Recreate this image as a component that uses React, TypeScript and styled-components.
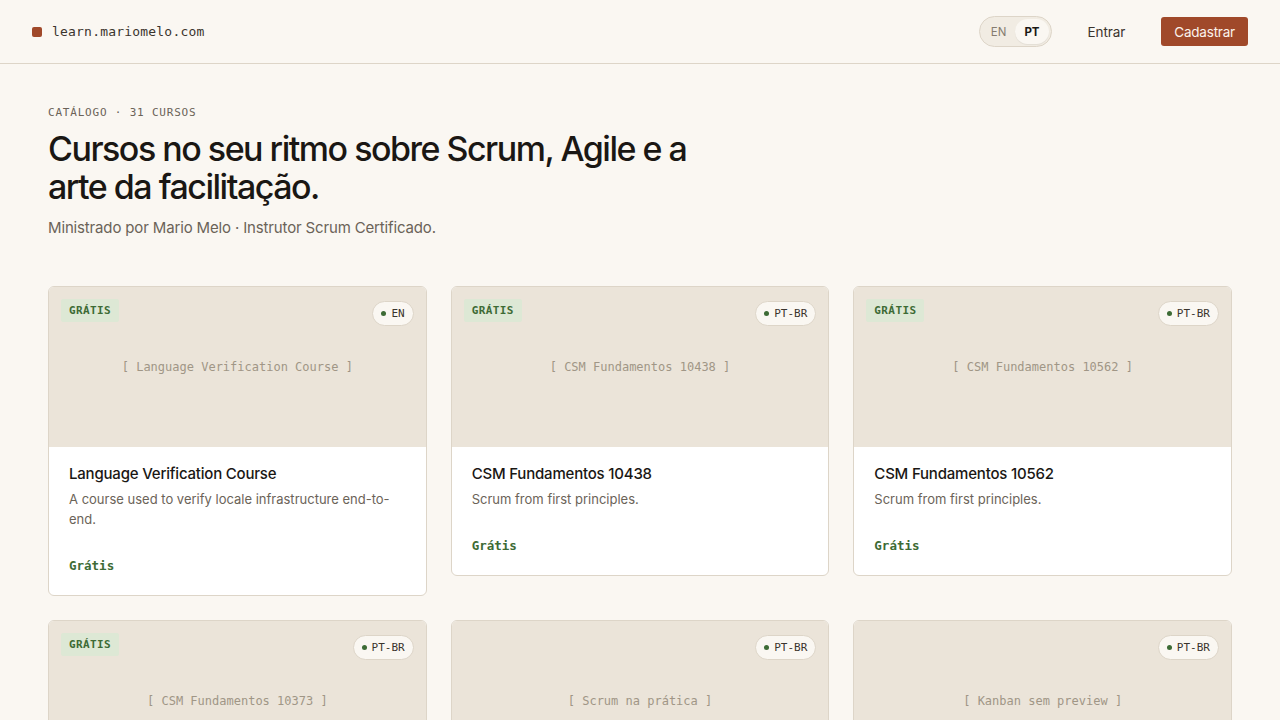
import styled, { createGlobalStyle } from "styled-components";

const C = {
  bg: "#faf7f2",
  line: "#ddd5c8",
  ink: "#1a1714",
  muted: "#6b6358",
  accent: "#a0492a",
  media: "#ebe4d9",
  green: "#3d6b35",
  greenBg: "#dde8d5",
};

const sans = `Inter, "Noto Sans", "DejaVu Sans", sans-serif`;
const mono = `"DejaVu Sans Mono", "Liberation Mono", monospace`;

type Course = {
  title: string;
  desc?: string;
  locale: string;
  free?: boolean;
};

const courses: Course[] = [
  {
    title: "Language Verification Course",
    desc: "A course used to verify locale infrastructure end-to-end.",
    locale: "EN",
    free: true,
  },
  { title: "CSM Fundamentos 10438", desc: "Scrum from first principles.", locale: "PT-BR", free: true },
  { title: "CSM Fundamentos 10562", desc: "Scrum from first principles.", locale: "PT-BR", free: true },
  { title: "CSM Fundamentos 10373", desc: "Scrum from first principles.", locale: "PT-BR", free: true },
  { title: "Scrum na prática", desc: "Scrum from first principles.", locale: "PT-BR" },
  { title: "Kanban sem preview", desc: "Scrum from first principles.", locale: "PT-BR" },
];

export default function App() {
  return (
    <>
      <GlobalStyle />
      <Header>
        <Brand>
          <BrandMark />
          learn.mariomelo.com
        </Brand>
        <Nav>
          <LangToggle>
            <LangOption>EN</LangOption>
            <LangOption $active>PT</LangOption>
          </LangToggle>
          <LinkButton>Entrar</LinkButton>
          <PrimaryButton>Cadastrar</PrimaryButton>
        </Nav>
      </Header>
      <Main>
        <Eyebrow>CATÁLOGO · 31 CURSOS</Eyebrow>
        <Title>Cursos no seu ritmo sobre Scrum, Agile e a arte da facilitação.</Title>
        <Lead>Ministrado por Mario Melo · Instrutor Scrum Certificado.</Lead>
        <Grid>
          {courses.map((c) => (
            <Card key={c.title}>
              <Media>
                {c.free && <FreeTag>GRÁTIS</FreeTag>}
                <LocaleChip>
                  <Dot />
                  {c.locale}
                </LocaleChip>
                <Placeholder>[ {c.title} ]</Placeholder>
              </Media>
              <Body>
                <CardTitle>{c.title}</CardTitle>
                {c.desc && <CardDesc>{c.desc}</CardDesc>}
                <Price>{c.free ? "Grátis" : "R$ 490"}</Price>
              </Body>
            </Card>
          ))}
        </Grid>
      </Main>
    </>
  );
}

const GlobalStyle = createGlobalStyle`
  * { box-sizing: border-box; }
  body {
    margin: 0;
    background: ${C.bg};
    color: ${C.ink};
    font-family: ${sans};
  }
`;

const Header = styled.header`
  height: 64px;
  padding: 0 32px;
  display: flex;
  align-items: center;
  justify-content: space-between;
  border-bottom: 1px solid ${C.line};
`;

const Brand = styled.div`
  display: flex;
  align-items: center;
  gap: 10px;
  font-family: ${mono};
  font-size: 13px;
  letter-spacing: 0.2px;
  color: #3a342d;
`;

const BrandMark = styled.span`
  width: 10px;
  height: 10px;
  border-radius: 2px;
  background: ${C.accent};
`;

const Nav = styled.nav`
  display: flex;
  align-items: center;
`;

const LangToggle = styled.div`
  display: flex;
  align-items: center;
  height: 31px;
  padding: 2px;
  border: 1px solid ${C.line};
  border-radius: 16px;
  background: #f1ece3;
  margin-right: 24px;
`;

const LangOption = styled.span<{ $active?: boolean }>`
  height: 25px;
  display: flex;
  align-items: center;
  padding: 0 9px;
  border-radius: 13px;
  font-family: ${sans};
  font-size: 11.5px;
  font-weight: ${(p) => (p.$active ? 700 : 400)};
  color: ${(p) => (p.$active ? C.ink : "#857c70")};
  background: ${(p) => (p.$active ? C.bg : "transparent")};
  box-shadow: ${(p) => (p.$active ? "0 1px 1px rgba(0,0,0,0.06)" : "none")};
`;

const LinkButton = styled.span`
  padding: 0 12px;
  font-size: 13.5px;
  letter-spacing: -0.1px;
  color: #3a342d;
  margin-right: 24px;
`;

const PrimaryButton = styled.span`
  height: 29px;
  padding: 0 13px;
  display: flex;
  align-items: center;
  border-radius: 3px;
  background: ${C.accent};
  color: #fbf3ec;
  font-size: 13.5px;
  letter-spacing: -0.2px;
`;

const Main = styled.main`
  padding: 42px 48px 0;
`;

const Eyebrow = styled.div`
  font-family: ${mono};
  font-size: 11px;
  letter-spacing: 0.8px;
  color: ${C.muted};
`;

const Title = styled.h1`
  margin: 11px 0 0;
  max-width: 700px;
  font-size: 34px;
  line-height: 38px;
  font-weight: 500;
  letter-spacing: -1.5px;
  color: ${C.ink};
`;

const Lead = styled.p`
  margin: 11px 0 0;
  font-size: 15px;
  line-height: 22px;
  letter-spacing: -0.15px;
  color: ${C.muted};
`;

const Grid = styled.div`
  margin-top: 47px;
  display: grid;
  grid-template-columns: repeat(3, 1fr);
  gap: 24px;
  align-items: start;
`;

const Card = styled.article`
  border: 1px solid ${C.line};
  border-radius: 6px;
  overflow: hidden;
  background: #fff;
`;

const Media = styled.div`
  position: relative;
  height: 160px;
  background: ${C.media};
  display: flex;
  align-items: center;
  justify-content: center;
`;

const FreeTag = styled.span`
  position: absolute;
  top: 12px;
  left: 12px;
  height: 23px;
  padding: 0 8px;
  display: flex;
  align-items: center;
  background: ${C.greenBg};
  border-radius: 2px;
  font-family: ${mono};
  font-size: 11px;
  font-weight: 600;
  letter-spacing: 0.4px;
  color: ${C.green};
`;

const LocaleChip = styled.span`
  position: absolute;
  top: 14px;
  right: 12px;
  height: 25px;
  padding: 0 8px;
  display: flex;
  align-items: center;
  gap: 5px;
  border: 1px solid ${C.line};
  border-radius: 13px;
  background: ${C.bg};
  font-family: ${mono};
  font-size: 11px;
  color: #3a342d;
`;

const Dot = styled.span`
  width: 5px;
  height: 5px;
  border-radius: 50%;
  background: ${C.green};
`;

const Placeholder = styled.span`
  font-family: ${mono};
  font-size: 12px;
  color: #a09686;
`;

const Body = styled.div`
  padding: 16px 20px 20px;
`;

const CardTitle = styled.h3`
  margin: 0;
  font-size: 15px;
  line-height: 22px;
  font-weight: 500;
  letter-spacing: -0.2px;
  color: ${C.ink};
`;

const CardDesc = styled.p`
  margin: 4px 0 0;
  font-size: 13px;
  line-height: 20px;
  color: ${C.muted};
`;

const Price = styled.div`
  margin-top: 28px;
  font-family: ${mono};
  font-size: 12.5px;
  line-height: 18px;
  font-weight: 600;
  color: ${C.green};
`;
